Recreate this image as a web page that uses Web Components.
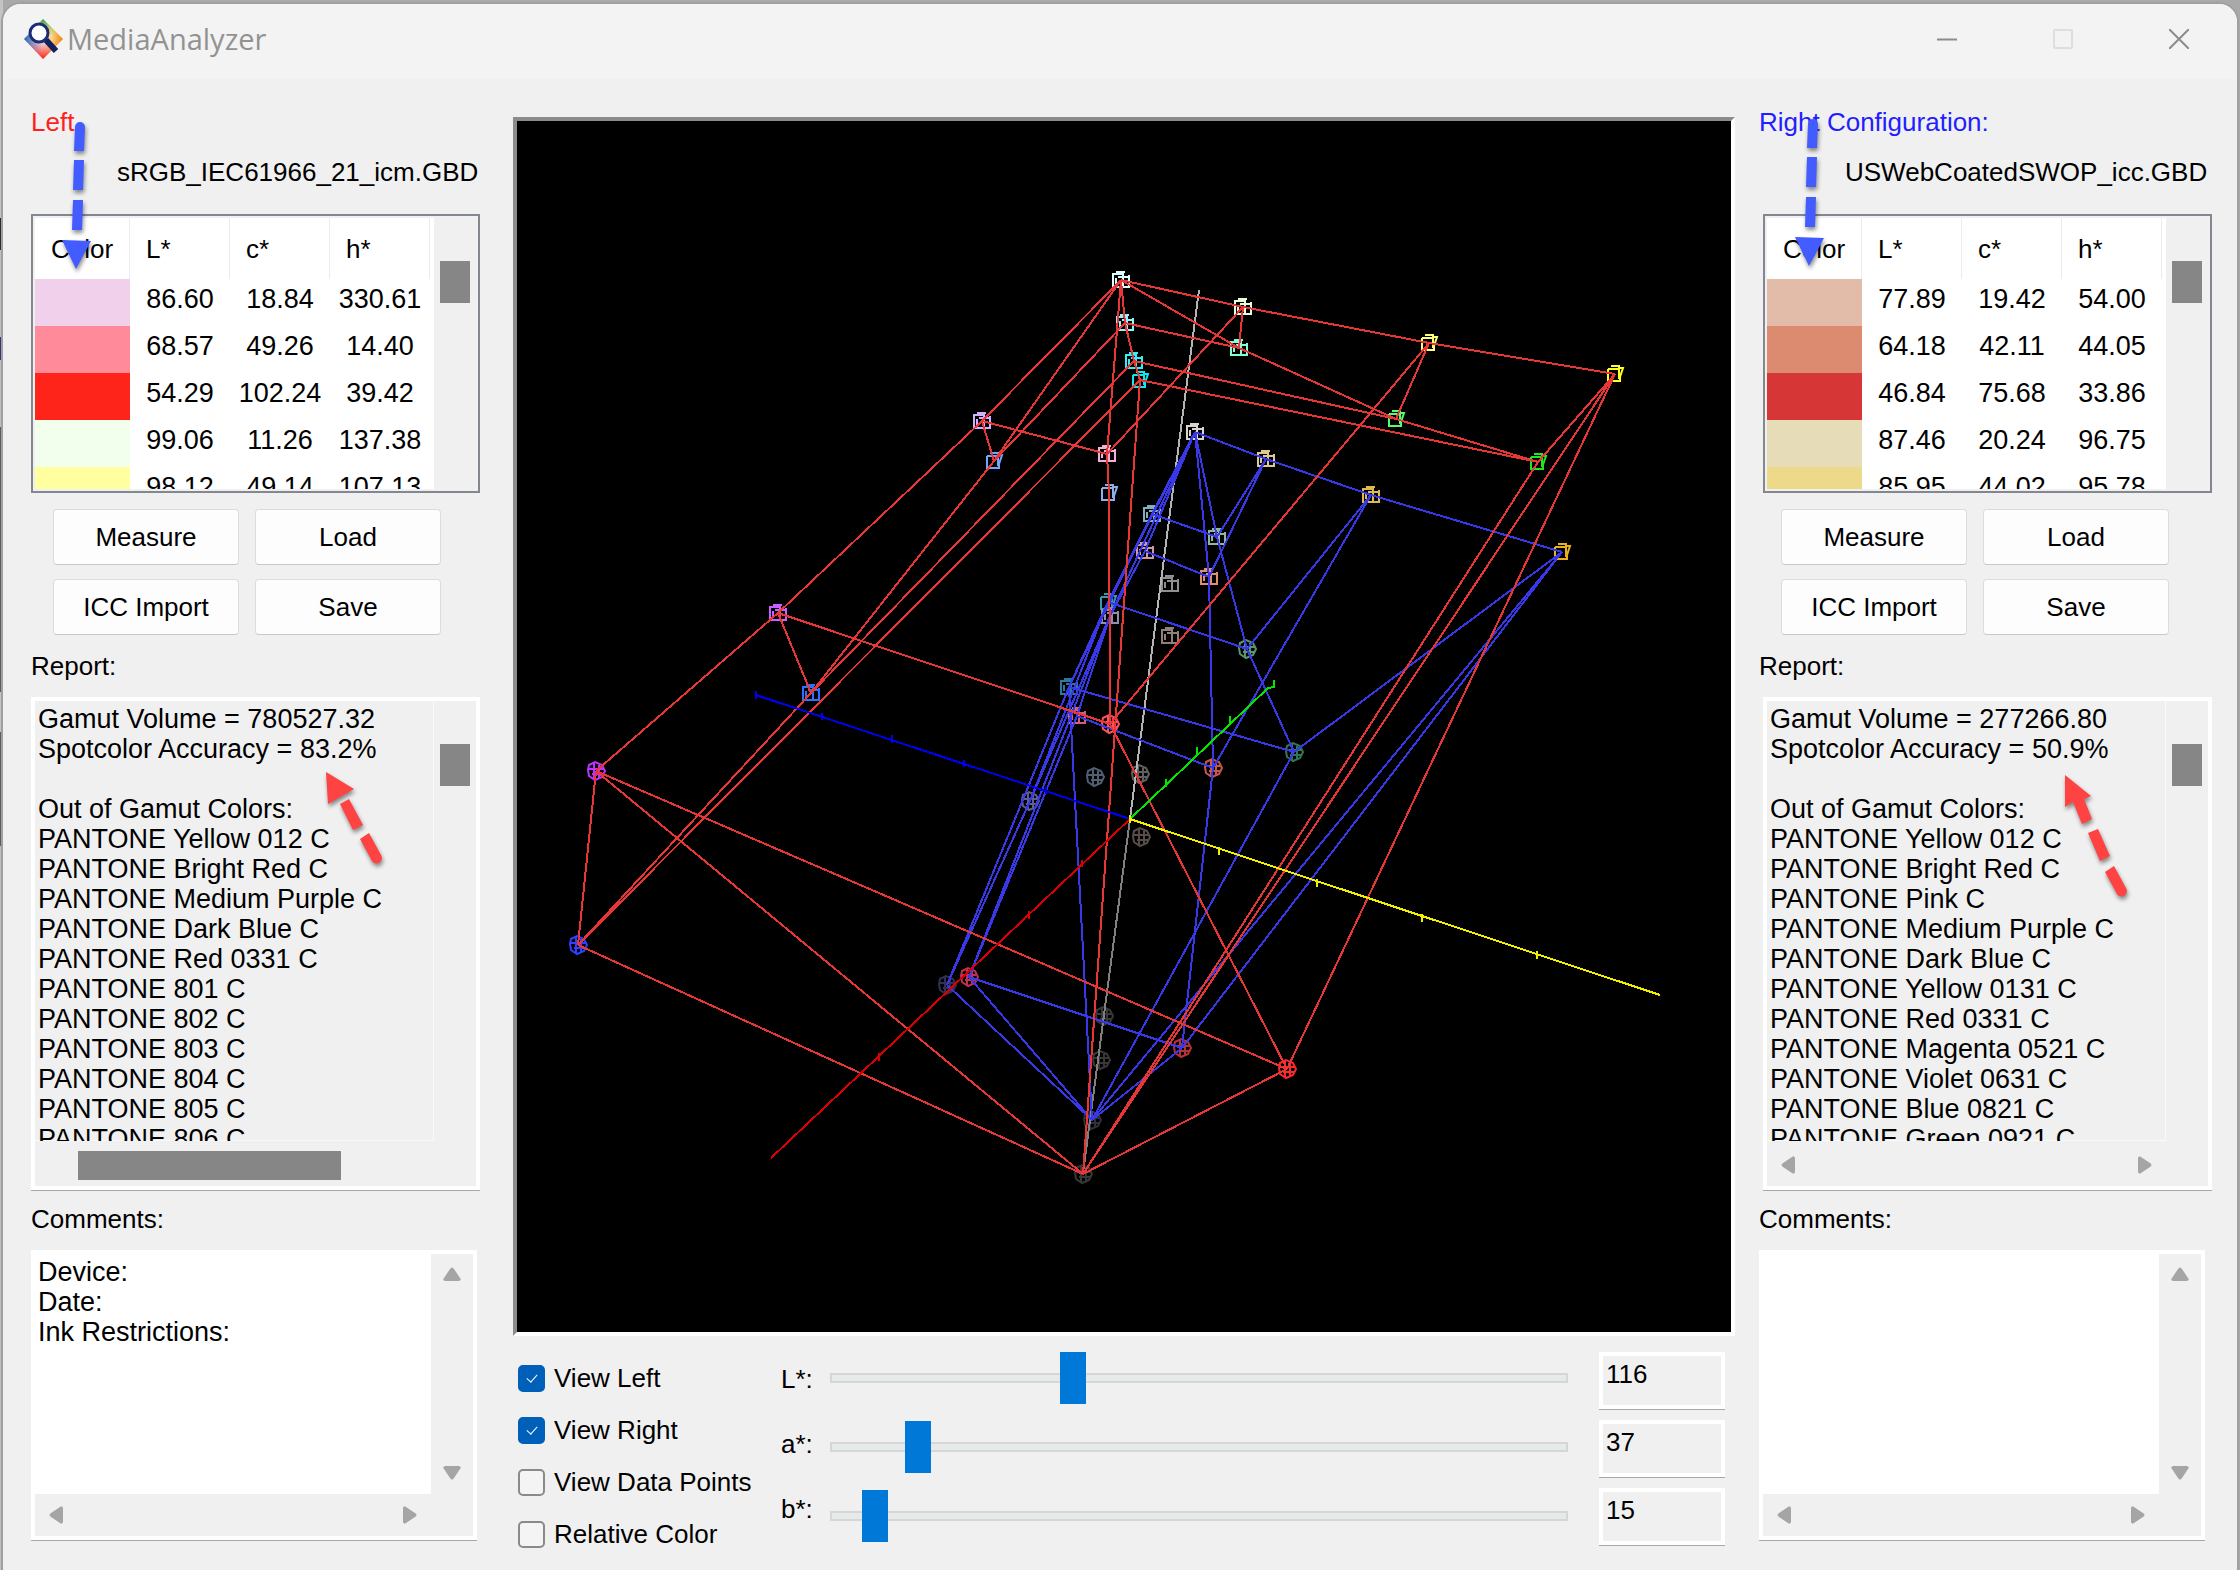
<!DOCTYPE html>
<html lang="en">
<head>
<meta charset="utf-8">
<title>MediaAnalyzer</title>
<style>
html, body {
    margin: 0;
}
body {
    min-height: 100vh;
    box-sizing: border-box;
    padding: 4px 3px 1px 3px;
    font-family: "Liberation Sans", Arial, sans-serif;
    font-size: 26px;
    line-height: 30px;
    color: #000;
    background:
        linear-gradient(to bottom,
            #c4c4c4 0 218px, #2b2b2b 218px 250px, #c0c0c0 250px 337px,
            #34347c 337px 360px, #c0c0c0 360px 427px, #5c5c5c 427px 692px,
            #c4c4c4 692px 732px, #5c5c5c 732px 846px, #c0c0c0 846px) left top / 3px 100% no-repeat,
        #a9a9a9;
}
</style>
</head>
<body>

<media-window caption="MediaAnalyzer">
    <gamut-panel slot="left" side="left"></gamut-panel>
    <gamut-view slot="center"></gamut-view>
    <view-controls slot="center"></view-controls>
    <gamut-panel slot="right" side="right"></gamut-panel>
</media-window>

<script>
(function () {

var PANELS = {
    left: {
        title: "Left",
        color: "#ff1f1f",
        file: "sRGB_IEC61966_21_icm.GBD",
        rows: [
            ["#f1d0ec", "86.60", "18.84", "330.61"],
            ["#ff8a9a", "68.57", "49.26", "14.40"],
            ["#ff241a", "54.29", "102.24", "39.42"],
            ["#f2ffed", "99.06", "11.26", "137.38"],
            ["#ffffa0", "98.12", "49.14", "107.13"]
        ],
        report: [
            "Gamut Volume = 780527.32", "Spotcolor Accuracy = 83.2%", "",
            "Out of Gamut Colors:", "PANTONE Yellow 012 C", "PANTONE Bright Red C",
            "PANTONE Medium Purple C", "PANTONE Dark Blue C", "PANTONE Red 0331 C",
            "PANTONE 801 C", "PANTONE 802 C", "PANTONE 803 C", "PANTONE 804 C",
            "PANTONE 805 C", "PANTONE 806 C"
        ],
        horizontal: "thumb",
        comments: ["Device:", "Date:", "Ink Restrictions:"]
    },
    right: {
        title: "Right Configuration:",
        color: "#1f1fff",
        file: "USWebCoatedSWOP_icc.GBD",
        rows: [
            ["#e2bba9", "77.89", "19.42", "54.00"],
            ["#dc8b70", "64.18", "42.11", "44.05"],
            ["#d63635", "46.84", "75.68", "33.86"],
            ["#e6ddb8", "87.46", "20.24", "96.75"],
            ["#ecda8a", "85.95", "44.02", "95.78"]
        ],
        report: [
            "Gamut Volume = 277266.80", "Spotcolor Accuracy = 50.9%", "",
            "Out of Gamut Colors:", "PANTONE Yellow 012 C", "PANTONE Bright Red C",
            "PANTONE Pink C", "PANTONE Medium Purple C", "PANTONE Dark Blue C",
            "PANTONE Yellow 0131 C", "PANTONE Red 0331 C", "PANTONE Magenta 0521 C",
            "PANTONE Violet 0631 C", "PANTONE Blue 0821 C", "PANTONE Green 0921 C"
        ],
        horizontal: "arrows",
        comments: []
    }
};

class MediaWindow extends HTMLElement {

    constructor() {
        super();
        this.attachShadow({ mode: "open" });
    }

    connectedCallback() {
        this.shadowRoot.innerHTML = `
        <style>
        :host{
            display:flex;
            flex-direction:column;
            min-height:calc(100vh - 5px);
            background:#f0f0f0;
            border-radius:18px;
            overflow:hidden;
            box-shadow:0 0 0 2px #a0a0a0;
        }
        header{
            display:flex;
            align-items:center;
            height:75px;
            box-sizing:border-box;
            padding:0 44px 5px 20px;
            background:#f3f3f3;
        }
        h1{
            flex:1;
            margin:0 0 0 2px;
            font:400 29px/40px "Open Sans", sans-serif;
            color:#929292;
        }
        .logo{
            width:42px;
            height:42px;
        }
        nav{
            display:flex;
            gap:88px;
        }
        nav button{
            display:flex;
            padding:4px;
            border:0;
            background:none;
        }
        main{
            flex:1;
            display:grid;
            grid-template-columns:449px minmax(0, 1fr) 454px;
            align-items:start;
            padding:0 24px 27px 28px;
        }
        .center{
            display:flex;
            flex-direction:column;
            padding:38px 24px 0 33px;
        }
        </style>
        <header>
            <svg class="logo" viewBox="0 0 42 42" aria-hidden="true">
                <defs>
                    <linearGradient id="a" x1="0" y1="0" x2="1" y2="0">
                        <stop offset="0" stop-color="#1c5fb8"/><stop offset=".45" stop-color="#e8d8e8"/>
                        <stop offset=".7" stop-color="#f8d890"/><stop offset="1" stop-color="#f08000"/>
                    </linearGradient>
                    <linearGradient id="b" x1="0" y1="0" x2="0" y2="1">
                        <stop offset="0" stop-color="#2a9a30"/><stop offset=".42" stop-color="#c0d850" stop-opacity="0"/>
                        <stop offset=".6" stop-color="#ff5040" stop-opacity=".1"/><stop offset="1" stop-color="#ff1808"/>
                    </linearGradient>
                </defs>
                <path d="M20 1L40 21 20 41 1 21z" fill="url(#a)"/>
                <path d="M20 1L40 21 20 41 1 21z" fill="url(#b)"/>
                <path d="M23 22l10 11" stroke="#14205c" stroke-width="6"/>
                <circle cx="16" cy="15" r="9" fill="#fff" stroke="#1c2c78" stroke-width="3"/>
            </svg>
            <h1></h1>
            <nav>
                <button aria-label="Minimize"><svg width="20" height="20"><path d="M0 10.5h20" stroke="#8c8c8c" stroke-width="2"/></svg></button>
                <button aria-label="Maximize" disabled><svg width="20" height="20"><rect x="1" y="1" width="18" height="18" rx="1" fill="none" stroke="#dedede" stroke-width="2"/></svg></button>
                <button aria-label="Close"><svg width="20" height="20"><path d="M0 0l20 20M20 0L0 20" stroke="#8c8c8c" stroke-width="2"/></svg></button>
            </nav>
        </header>
        <main>
            <slot name="left"></slot>
            <div class="center"><slot name="center"></slot></div>
            <slot name="right"></slot>
        </main>
        `;
        this.shadowRoot.querySelector("h1").textContent = this.getAttribute("caption");
    }
}

// Scroll bar: bar="thumb" draws a grey grip, bar="arrows" draws the two end buttons
class ScrollStrip extends HTMLElement {

    constructor() {
        super();
        this.attachShadow({ mode: "open" });
    }

    connectedCallback() {
        var vertical = this.hasAttribute("vertical");
        var inner = `<i></i>`;

        if (this.getAttribute("bar") === "arrows") {
            inner = vertical
                ? `<svg width="18" height="14"><path d="M2 14Q-1 13 1 11L7 2Q9-1 11 2L17 11Q19 13 16 14z"/></svg>
                   <svg width="18" height="14"><path d="M2 0Q-1 1 1 3L7 12Q9 15 11 12L17 3Q19 1 16 0z"/></svg>`
                : `<svg width="14" height="18"><path d="M14 2Q13-1 11 1L2 7Q-1 9 2 11L11 17Q13 19 14 16z"/></svg>
                   <svg width="14" height="18"><path d="M0 2Q1-1 3 1L12 7Q15 9 12 11L3 17Q1 19 0 16z"/></svg>`;
        }

        this.shadowRoot.innerHTML = `
        <style>
        :host{
            display:flex;
            align-items:center;
            justify-content:space-between;
            padding:0 14px;
            background:#f0f0f0;
            fill:#a5a5a5;
        }
        :host([vertical]){
            flex-direction:column;
            padding:13px 0 14px;
        }
        :host([bar="thumb"]){
            padding:0 43px;
            justify-content:flex-start;
        }
        :host([bar="thumb"][vertical]){
            padding:43px 0;
        }
        i{
            width:263px;
            height:29px;
            background:#868686;
        }
        :host([vertical]) i{
            width:30px;
            height:42px;
        }
        svg{
            display:block;
        }
        </style>
        ${inner}
        `;
    }
}

class ScrollBox extends HTMLElement {

    constructor() {
        super();
        this.attachShadow({ mode: "open" });
    }

    connectedCallback() {
        this.shadowRoot.innerHTML = `
        <style>
        :host{
            display:grid;
            grid-template-columns:minmax(0, 1fr) 42px;
            grid-template-rows:minmax(0, 1fr) 42px;
            box-sizing:border-box;
            border:4px solid #fff;
            box-shadow:0 1px 0 #a8a8a8;
            background:#f0f0f0;
        }
        </style>
        <slot></slot>
        <scroll-strip vertical bar="${this.getAttribute("vertical-bar")}"></scroll-strip>
        <scroll-strip bar="${this.getAttribute("horizontal-bar")}"></scroll-strip>
        `;
    }
}

class SwatchTable extends HTMLElement {

    constructor() {
        super();
        this.attachShadow({ mode: "open" });
    }

    set rows(rows) {
        var html = "";

        rows.forEach(function(row){
            html += `
            <tr>
                <td style="background:${row[0]}"></td>
                <td>${row[1]}</td>
                <td>${row[2]}</td>
                <td>${row[3]}</td>
            </tr>
            `;
        });

        this.shadowRoot.innerHTML = `
        <style>
        :host{
            display:grid;
            grid-template-columns:minmax(0, 1fr) 42px;
            height:279px;
            box-sizing:border-box;
            border:2px solid #828790;
            padding:2px;
            overflow:hidden;
        }
        .view{
            overflow:hidden;
            background:#fff;
        }
        table{
            width:395px;
            border-collapse:collapse;
            table-layout:fixed;
            font-size:27px;
        }
        col:first-child{
            width:95px;
        }
        th, td{
            box-sizing:border-box;
            padding:0;
        }
        th{
            height:61px;
            padding:0 0 0 16px;
            text-align:left;
            vertical-align:middle;
            font-weight:400;
            font-size:26px;
            box-shadow:inset -1px 0 0 #ececec;
        }
        td{
            height:47px;
            padding-bottom:7px;
            text-align:center;
        }
        </style>
        <div class="view">
            <table>
                <colgroup><col><col><col><col></colgroup>
                <thead><tr><th>Color</th><th>L*</th><th>c*</th><th>h*</th></tr></thead>
                <tbody>${html}</tbody>
            </table>
        </div>
        <scroll-strip vertical bar="thumb"></scroll-strip>
        `;
    }
}

class GamutPanel extends HTMLElement {

    constructor() {
        super();
        this.attachShadow({ mode: "open" });
    }

    connectedCallback() {
        var side = this.getAttribute("side");
        var data = PANELS[side];

        this.shadowRoot.innerHTML = `
        <style>
        :host{
            display:flex;
            flex-direction:column;
            position:relative;
            padding-top:28px;
        }
        h2, p{
            margin:0;
            font:inherit;
        }
        h2{
            color:${data.color};
        }
        .file{
            margin:20px 0 27px;
            padding-left:86px;
            white-space:nowrap;
        }
        swatch-table, .report{
            width:449px;
        }
        :host([side="right"]) swatch-table,
        :host([side="right"]) .report{
            margin-left:4px;
        }
        .buttons{
            display:grid;
            grid-template-columns:186px 186px;
            gap:14px 16px;
            padding:16px 0 16px 22px;
        }
        .buttons button{
            height:56px;
            padding:0;
            border:1px solid #dcdcdc;
            border-bottom-color:#c8c8c8;
            border-radius:4px;
            background:#fdfdfd;
            font:inherit;
            color:inherit;
        }
        .report{
            height:493px;
            margin:16px 0 14px;
        }
        .comments{
            width:446px;
            height:290px;
            margin-top:16px;
        }
        textarea{
            min-width:0;
            box-sizing:border-box;
            margin:0;
            padding:3px 0 0 3px;
            border:0;
            outline:0;
            resize:none;
            overflow:hidden;
            white-space:pre;
            background:#fff;
            font:inherit;
            font-size:27px;
            line-height:30px;
            color:inherit;
        }
        .report textarea{
            background:#f0f0f0;
            box-shadow:inset -1px -1px 0 #fafafa;
            border-bottom:3px solid #f0f0f0;
        }
        dash-arrow{
            position:absolute;
        }
        .down{
            left:31px;
            top:39px;
        }
        .up{
            left:292px;
            top:690px;
        }
        :host([side="right"]) .down{
            left:36px;
            top:36px;
        }
        :host([side="right"]) .up{
            left:301px;
            top:692px;
        }
        </style>

        <h2>${data.title}</h2>
        <p class="file">${data.file}</p>
        <swatch-table></swatch-table>
        <div class="buttons">
            <button>Measure</button>
            <button>Load</button>
            <button>ICC Import</button>
            <button>Save</button>
        </div>
        <label for="report">Report:</label>
        <scroll-box class="report" vertical-bar="thumb" horizontal-bar="${data.horizontal}">
            <textarea id="report" readonly spellcheck="false">${data.report.join("\n")}</textarea>
        </scroll-box>
        <label for="comments">Comments:</label>
        <scroll-box class="comments" vertical-bar="arrows" horizontal-bar="arrows">
            <textarea id="comments" spellcheck="false">${data.comments.join("\n")}</textarea>
        </scroll-box>
        <dash-arrow class="down" kind="down"></dash-arrow>
        <dash-arrow class="up" kind="${side === "left" ? "up" : "up-long"}"></dash-arrow>
        `;

        this.shadowRoot.querySelector("swatch-table").rows = data.rows;
    }
}

// Dashed callout arrows that lie over the panels
class DashArrow extends HTMLElement {

    constructor() {
        super();
        this.attachShadow({ mode: "open" });
    }

    connectedCallback() {
        var shapes = {
            "down": `<g fill="#425cff"><path d="M13 9a5 5 0 0 1 10 0l-1 24h-10zM12 42h10l-1 30h-10zM11 82h10l-1 30h-10zM0 122l29 1-15 28z"/></g>`,
            "up": `<g fill="#ff4242"><path d="M3 3l28 17-26 15zM17 35l9-5 14 26-10 5zM37 70l9-6 12 22a5 5 0 0 1-9 6z"/></g>`,
            "up-long": `<g fill="#ff4242"><path d="M5 4l26 21-7 3 8 20-10 5-9-22-8 5zM28 62l10-4 12 27-10 5zM45 101l9-6 12 22a5 5 0 0 1-9 6z"/></g>`
        };

        this.shadowRoot.innerHTML = `
        <style>
        :host{
            display:block;
            pointer-events:none;
        }
        svg{
            display:block;
            filter:drop-shadow(1px 3px 2px rgba(0,0,0,.45));
        }
        </style>
        <svg width="76" height="160" aria-hidden="true">${shapes[this.getAttribute("kind")]}</svg>
        `;
    }
}

class GamutView extends HTMLElement {

    constructor() {
        super();
        this.attachShadow({ mode: "open" });
    }

    connectedCallback() {
        // name: [x, y, marker colour, marker shape]
        var red = {
            A: [1121, 280, "#d8ffff", "cube"], B: [1243, 307, "#e4ffd8", "cube"], C: [1429, 343, "#ffff78", "frame"],
            D: [1615, 374, "#ffff20", "frame"], E: [1125, 323, "#90f4ff", "cube"], F: [1239, 348, "#80ffd8", "cube"],
            G: [1134, 361, "#30f0f8", "cube"], H: [1140, 380, "#10e8f0", "frame"], I: [1396, 419, "#50ff70", "frame"],
            J: [1538, 462, "#20e820", "frame"], K: [982, 421, "#d0b0ff", "cube"], L: [994, 461, "#70a8ff", "frame"],
            M: [1107, 454, "#f0b0d8", "cube"], N: [1109, 493, "#90b0e8", "frame"], O: [778, 613, "#c860ff", "cube"],
            P: [811, 693, "#3070ff", "cube"], Q: [596, 771, "#c030ff", "ball"], R: [578, 945, "#3040ff", "ball"],
            S: [1110, 724, "#ff5060", "ball"], T: [1287, 1069, "#ff2828", "ball"], U: [1083, 1174, "#383838", "ball"]
        };
        var blue = {
            a: [1195, 432, "#dcd4cc", "cube"], b: [1266, 459, "#dcc890", "cube"], c: [1371, 495, "#e0b850", "cube"],
            d: [1562, 552, "#e8b020", "frame"], e: [1152, 514, "#80b0c0", "cube"], f: [1217, 537, "#90b898", "cube"],
            g: [1145, 551, "#d098a8", "cube"], h: [1209, 577, "#dc9070", "cube"], i: [1108, 602, "#3898b8", "frame"],
            j: [1110, 616, "#9090a8", "cube"], k: [1247, 649, "#589870", "ball"], l: [1069, 687, "#2878a0", "cube"],
            m: [1077, 716, "#d06080", "cube"], n: [1294, 752, "#307850", "ball"], o: [1213, 768, "#c85848", "ball"],
            p: [1030, 801, "#606090", "ball"], q: [947, 985, "#303058", "ball"], r: [969, 977, "#c03050", "ball"],
            s: [1182, 1048, "#b83038", "ball"], t: [1092, 1120, "#303038", "ball"]
        };
        var spots = {
            u: [1170, 584, "#909090", "cube"], v: [1170, 636, "#908078", "cube"], w: [1095, 777, "#506070", "ball"],
            x: [1140, 774, "#606060", "ball"], y: [1141, 837, "#584c48", "ball"], z: [1104, 1016, "#383838", "ball"],
            aa: [1101, 1060, "#383838", "ball"]
        };
        var redEdges = "AB BC CD AK AL KO OQ KL KM AM AE EG GH EL EF AF BF BM CS CI FI GI GP HR HJ IJ LP PR " +
            "DJ DU DT JU HU MN NS ST OS QT QU QR RU TU OP";
        var blueEdges = "ab bc cd ae ag ai aj af ah ef gh bf bh ck co fk ik kn ln mo dn dt ds nt ho os rs rt qt st " +
            "ei gj il ip jp jm jr lq pq mr lt el";

        function lines(points, edges){
            return edges.split(" ").map(function(e){
                var p = points[e[0]], q = points[e[1]];
                return `M${p[0]} ${p[1]}L${q[0]} ${q[1]}`;
            }).join("");
        }

        function markers(points){
            return Object.keys(points).map(function(k){
                var p = points[k];
                return `<use href="#${p[3]}" x="${p[0]}" y="${p[1]}" stroke="${p[2]}"/>`;
            }).join("");
        }

        this.shadowRoot.innerHTML = `
        <style>
        :host{
            display:block;
            border:4px solid;
            border-color:#8c8c8c #fff #fff #8c8c8c;
            background:#000;
        }
        svg{
            display:block;
            width:100%;
            height:auto;
            fill:none;
        }
        </style>
        <svg viewBox="517 121 1214 1211" role="img" aria-label="Gamut comparison">
            <defs>
                <path id="frame" d="M-7-5V7H5V3L8-6H3M-4-8H4V5M-7-5H4"/>
                <path id="cube" d="M-8-6H2V7H-8zM-5-8H4M-3-3H8V7H-3M8-5V4M-5-2V4"/>
                <path id="ball" d="M-7-6L-1-9 6-6 9 0 6 6-1 9-7 5-8-1zM-7-2H7M-2-8V8M3-6V7M-4 3H7"/>
            </defs>
            <g stroke-width="2">${markers(red)}${markers(blue)}${markers(spots)}</g>
            <g stroke-width="2" shape-rendering="crispEdges">
                <path stroke="#b4b4b4" d="M1199 290L1130 819"/>
                <path stroke="#808080" d="M1130 819L1083 1173"/>
                <path stroke="#3838e8" d="${lines(blue, blueEdges)}"/>
                <path stroke="#e83636" d="${lines(red, redEdges)}"/>
                <path stroke="#0000f0" d="M1130 819L756 695m0-4v8M822 713v7M892 735v8M964 760v7M1046 787v7"/>
                <path stroke="#00e800" d="M1130 819L1268 688l6-1v-7M1166 779v8M1197 747v8M1230 716v8"/>
                <path stroke="#d80000" d="M1130 819L771 1158M1082 860v7M1029 911v8M879 1053v8"/>
                <path stroke="#f0f000" d="M1130 819L1660 995M1130 815v8M1219 847v8M1317 879v8M1422 914v8M1537 951v8"/>
            </g>
        </svg>
        `;
    }
}

class ViewControls extends HTMLElement {

    constructor() {
        super();
        this.attachShadow({ mode: "open" });

        this.shadowRoot.innerHTML = `
        <style>
        :host{
            display:flex;
            align-items:flex-start;
            padding:16px 10px 0 5px;
        }
        .checks{
            width:263px;
            display:flex;
            flex-direction:column;
        }
        .checks label{
            display:flex;
            align-items:center;
            gap:9px;
            height:52px;
            white-space:nowrap;
        }
        input{
            margin:0;
            box-sizing:border-box;
            font:inherit;
            color:inherit;
        }
        input[type=checkbox]{
            appearance:none;
            display:grid;
            place-items:center;
            width:27px;
            height:27px;
            border:2px solid #8a8a8a;
            border-radius:5px;
            background:#f4f4f4;
        }
        input[type=checkbox]:checked{
            border-color:#005fb8;
            background:#005fb8;
        }
        input[type=checkbox]:checked::before{
            content:"";
            width:5px;
            height:9px;
            margin-bottom:3px;
            border:solid #fff;
            border-width:0 1px 1px 0;
            rotate:42deg;
        }
        .names{
            width:49px;
            display:flex;
            flex-direction:column;
            gap:35px;
            padding-top:12px;
        }
        .sliders{
            flex:1;
            display:flex;
            flex-direction:column;
            gap:17px;
        }
        input[type=range]{
            appearance:none;
            display:block;
            width:100%;
            height:52px;
            background:none;
        }
        input[type=range]::-webkit-slider-runnable-track{
            height:10px;
            box-sizing:border-box;
            border:2px solid #d6d6d6;
            background:#e7eaea;
        }
        input[type=range]::-webkit-slider-thumb{
            appearance:none;
            width:26px;
            height:52px;
            margin-top:-23px;
            background:#0078d7;
        }
        .values{
            display:flex;
            flex-direction:column;
            gap:11px;
            padding-left:31px;
        }
        input[type=text]{
            width:126px;
            height:57px;
            padding:0 0 13px 3px;
            border:4px solid #fff;
            box-shadow:0 1px 0 #a8a8a8;
            background:#f0f0f0;
            line-height:30px;
        }
        </style>

        <div class="checks">
            <label><input type="checkbox" checked>View Left</label>
            <label><input type="checkbox" checked>View Right</label>
            <label><input type="checkbox">View Data Points</label>
            <label><input type="checkbox">Relative Color</label>
        </div>
        <div class="names">
            <label for="l">L*:</label>
            <label for="a">a*:</label>
            <label for="b">b*:</label>
        </div>
        <div class="sliders">
            <input type="range" id="l" min="0" max="360" value="116">
            <input type="range" id="a" min="0" max="360" value="37">
            <input type="range" id="b" min="0" max="360" value="15">
        </div>
        <div class="values">
            <input type="text" value="116" aria-label="L* value">
            <input type="text" value="37" aria-label="a* value">
            <input type="text" value="15" aria-label="b* value">
        </div>
        `;
    }
}

customElements.define("scroll-strip", ScrollStrip);
customElements.define("scroll-box", ScrollBox);
customElements.define("swatch-table", SwatchTable);
customElements.define("dash-arrow", DashArrow);
customElements.define("gamut-panel", GamutPanel);
customElements.define("gamut-view", GamutView);
customElements.define("view-controls", ViewControls);
customElements.define("media-window", MediaWindow);

})();
</script>
</body>
</html>
